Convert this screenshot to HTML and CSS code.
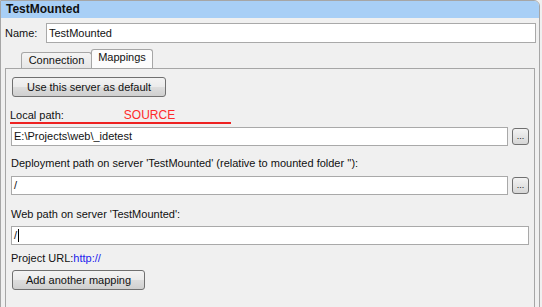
FILE: index.html
```html
<!DOCTYPE html>
<html lang="en">
<head>
  <meta charset="UTF-8">
  <title>TestMounted</title>
  <link rel="stylesheet" href="styles.css">
</head>
<body>
  <div class="frame">
    <div class="titlebar">TestMounted</div>

    <div class="name-row">
      <span class="name-label">Name:</span>
      <div class="field">TestMounted</div>
    </div>

    <div class="tabs">
      <div class="tab">Connection</div>
      <div class="tab active">Mappings</div>
    </div>

    <div class="panel">
      <button class="btn default-btn">Use this server as default</button>

      <div class="label source-label">
        <span>Local path:</span>
        <span class="source">SOURCE</span>
      </div>
      <div class="path-row">
        <div class="field">E:\Projects\web\_idetest</div>
        <button class="browse">...</button>
      </div>

      <div class="label gap-top">Deployment path on server 'TestMounted' (relative to mounted folder ''):</div>
      <div class="path-row gap-field">
        <div class="field">/</div>
        <button class="browse">...</button>
      </div>

      <div class="label gap-top-lg">Web path on server 'TestMounted':</div>
      <div class="path-row gap-field-sm">
        <div class="field">/<span class="caret"></span></div>
      </div>

      <div class="label project-url">Project URL:<span class="link">http://</span></div>

      <button class="btn mapping-btn">Add another mapping</button>
    </div>
  </div>
</body>
</html>
```

FILE: styles.css
```css
:root {
  --bg: #f0f0f0;
  --line: #a6a6a6;
  --field-line: #a9a9a9;
  --title: #a8cff6;
}

html, body {
  margin: 0;
  padding: 0;
  height: 100%;
  overflow: hidden;
}

body {
  font-family: "Liberation Sans", Arial, sans-serif;
  font-size: 11px;
  color: #111;
  background-color: var(--bg);
}

.frame {
  box-sizing: border-box;
  width: 540px;
  min-height: 340px;
  border: 1px solid var(--line);
  border-top-right-radius: 6px;
  overflow: hidden;
}

.titlebar {
  height: 17px;
  line-height: 17px;
  padding-left: 5px;
  font-size: 12px;
  font-weight: bold;
  background-color: var(--title);
}

/* Name row */
.name-row {
  display: flex;
  align-items: center;
  margin-top: 5px;
  padding: 0 3px 0 4px;
}

.name-label {
  flex: 0 0 41px;
}

.name-row .field {
  height: 20px;
  line-height: 18px;
}

.field {
  flex: 1;
  box-sizing: border-box;
  height: 19px;
  line-height: 17px;
  padding-left: 2px;
  border: 1px solid var(--field-line);
  background-color: white;
  white-space: nowrap;
}

/* Tabs */
.tabs {
  display: flex;
  align-items: flex-end;
  height: 19px;
  margin-top: 6px;
  padding-left: 20px;
}

.tab {
  box-sizing: border-box;
  width: 71px;
  height: 16px;
  padding-top: 1px;
  line-height: 13px;
  text-align: center;
  border: 1px solid var(--line);
  border-bottom: none;
  border-radius: 3px 3px 0 0;
  background: linear-gradient(#f4f4f4, #e6e6e6);
}

.tab.active {
  width: 62px;
  height: 19px;
  margin-left: -1px;
  padding-top: 1px;
  background: #fcfcfc;
}

/* Tab page */
.panel {
  margin: 0 4px;
  padding: 8px 5px 0 5px;
  border: 1px solid var(--line);
  min-height: 260px;
}

.btn {
  display: block;
  box-sizing: border-box;
  height: 20px;
  margin-left: 1px;
  padding: 0;
  line-height: 16px;
  font-family: inherit;
  font-size: 11px;
  color: #111;
  text-align: center;
  border: 1px solid #707070;
  border-radius: 3px;
  background: linear-gradient(#f3f3f3 0%, #ebebeb 48%, #dddddd 52%, #cfcfcf 100%);
}

.default-btn {
  width: 154px;
}

.mapping-btn {
  width: 133px;
  margin-top: 5px;
}

.label {
  height: 13px;
  line-height: 13px;
  white-space: nowrap;
}

.source-label {
  display: flex;
  width: 221px;
  margin-top: 12px;
  margin-left: -1px;
  border-bottom: 2px solid #ee2222;
}

.source {
  margin-left: 60px;
  font-size: 12px;
  color: #ff2a2a;
}

.path-row {
  display: flex;
  align-items: center;
  margin-top: 3px;
}

.browse {
  box-sizing: border-box;
  width: 17px;
  height: 17px;
  margin-left: 4px;
  padding: 0;
  font-family: inherit;
  font-size: 9px;
  line-height: 13px;
  color: #111;
  border: 1px solid #707070;
  border-radius: 3px;
  background: linear-gradient(#f3f3f3, #d6d6d6);
}

.gap-top {
  margin-top: 11px;
}

.gap-field {
  margin-top: 6px;
}

.gap-top-lg {
  margin-top: 13px;
}

.gap-field-sm {
  margin-top: 5px;
}

.caret {
  display: inline-block;
  width: 1px;
  height: 13px;
  margin-left: 1px;
  vertical-align: -3px;
  background-color: black;
}

.project-url {
  margin-top: 7px;
}

.link {
  color: #2222ee;
}
```
